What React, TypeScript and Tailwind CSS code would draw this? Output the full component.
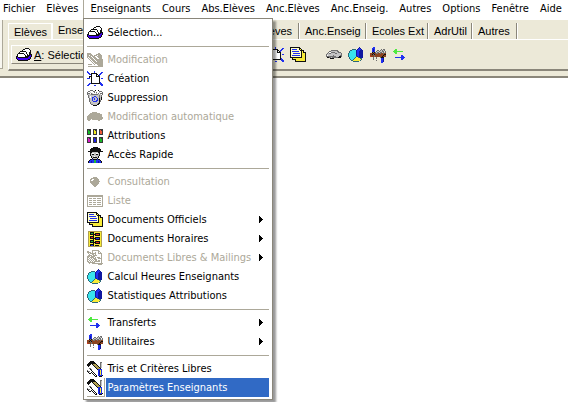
import React from 'react';
import clsx from 'clsx';

const palette: Record<string, string> = {
  k: '#101010',
  w: '#ffffff',
  g: '#aca899',
  s: '#c4c4c4',
  d: '#707070',
  b: '#2030f0',
  n: '#1018a0',
  c: '#38e4ec',
  t: '#2c6878',
  y: '#f8ec38',
  i: '#ffffc8',
  h: '#b0a050',
  r: '#e03020',
  e: '#20b838',
  l: '#50e840',
  p: '#4000f0',
  o: '#8c4420',
};

const Pixels = ({ rows }: { rows: string[] }) => {
  const top = Math.floor((16 - rows.length) / 2);
  return (
    <svg className="h-4 w-4 shrink-0" viewBox="0 0 16 16" shapeRendering="crispEdges" aria-hidden="true">
      {rows.map((row, y) =>
        [...row].map((c, x) =>
          palette[c] ? <rect key={`${x}-${y}`} x={x} y={y + top} width="1" height="1" fill={palette[c]} /> : null,
        ),
      )}
    </svg>
  );
};

const drawer = [
  '.........kkkk...',
  '.......kkwwwwk..',
  '......kwwwwwwwk.',
  '....kkkkkkwwwwk.',
  '...kwwwwwwkwwkk.',
  '..kkkkkkwwkwwkk.',
  '.kwwwwwwkwwkwkkk',
  '.kwwwwwwwkwkkkpk',
  'kkwwwwwwwkkkkppk',
  'kpkkkkkkkkkkppk.',
  'kpppppppppppppk.',
  '.kppppppppppkk..',
  '..kkkkkkkkkk....',
];

const edit = [
  'gggg.......gg...',
  'ggggg....ggggg..',
  'ggwggg.gggwgggg.',
  'ggggwgggwwggggg.',
  'g.gggwgggwwgggg.',
  '.g.gggwgggwwggg.',
  '..g.gggwgggggggg',
  '...g.gggwggggggg',
  '....g.gggwgggggg',
  '.....g.ggggggggg',
  '......g.gggggggg',
  '.gggg..g..gggggg',
  '...........ggggg',
  '.ggggggggggggggg',
];

const create = [
  'b......b........',
  'bb.....b......bb',
  '.bb.kkkkkk...bb.',
  '..bbkwwwwkk.bb..',
  '....kwwwwkwkb...',
  '..kkkwwwwkkkk...',
  '..k.kwwwwwwwk...',
  'bbb.kwwwwwwwk.bb',
  '....kwwwwwwwk...',
  '....kwwwwwwwk...',
  '....kwwwwwwwk...',
  '....kwwwwwwwkb..',
  '..bbkkkkkkkkkbb.',
  '.bb..........bbb',
  'bb.....bb.....bb',
];

const bin = [
  '...ddd..kwwk....',
  '.ddwwwddwwwwddd.',
  'dwwswwwdwdwwswwd',
  'dddwdswwwswdwddd',
  'dsssdddddddssswd',
  '.dssssssssssdsd.',
  '.dswsssbbsssdsd.',
  '.dswsbbssbssdsk.',
  '..dssbsbssbsksk.',
  '..dssbsbssbsksk.',
  '..dssbsssbbskd..',
  '..dsssbbbbsskd..',
  '...dssssssssk...',
  '...dssssssskk...',
  '....ddsssskk....',
  '......kkkk......',
];

const blob = [
  '.....ggggg......',
  '...gggggggggg...',
  '..ggggggggggggg.',
  '.gggggggggggggg.',
  'ggggggggggggggg.',
  'gggggggggggggggg',
  'gggggggggggggggg',
  'gggg.gggggggggg.',
  '.gg........gg...',
];

const person = [
  '......kkkkk.....',
  '....kkkkkkkkk...',
  '...kkkkkkkkkkk..',
  '...kkkkkkkkkkk..',
  '.kkkkkkkkkkkkkkk',
  '...kksssssskk...',
  '...kswwsswwsk...',
  '...kskksskksk...',
  '...kssssssssk...',
  '....ksswsssk....',
  '....kskkkksk....',
  '.....kssssk.....',
  '...kkbkkkkbkk...',
  '..kbbbbeebbbbk..',
  '.kbbnbbeebbnbbk.',
  '.kbbnbbeebbnbbk.',
];

const consult = [
  '......gggg......',
  '....ggggggg.....',
  '...ggwwggggg....',
  '...gwwgggggg....',
  '...gggggggggg...',
  '...ggggggggg....',
  '....gggggggg....',
  '.....gggggg.....',
  '......gggg......',
  '.......gg.......',
];

const list = [
  'gggggggggggggggg',
  'gggggggggggggggg',
  'g..............g',
  'g.ggg.ggg.gggg.g',
  'g..............g',
  'g.ggg.ggg.gggg.g',
  'g..............g',
  'g.ggg.ggg.gggg.g',
  'g..............g',
  'g.ggg.ggg.gggg.g',
  'g..............g',
  'gggggggggggggggg',
];

const docs = [
  'kkkkkkkkkk......',
  'kiiiiiiiikk.....',
  'kibbbbbiikyk....',
  'kiiiiiiiiikkkk..',
  'kibbbbbbbiikyk..',
  'kiiiiiiiiiikykkk',
  'kiibbbbbbbikyyyk',
  'kiiiiiiiiiikyyyk',
  'kibbbbbbbbikyyyk',
  'kiiiiiiiiiikyyyk',
  'kkkkkkkkkkkkyyyk',
  '..kyyyyyyyyyyyyk',
  '..kkkkyyyyyyyyyk',
  '.....kyyyyyyyyyk',
  '.....kkkkkkkkkkk',
];

const schedule = [
  '.hhhhhhhhhhhhhh.',
  '.hykkkkyyyyyyyh.',
  '.hykeekykkkkkyh.',
  '.hykkkkkkrrrkyh.',
  '.hyyyykykkkkkyh.',
  '.hykkkkyyyyyyyh.',
  '.hykrrkykkkkkyh.',
  '.hykkkkkkbbbkyh.',
  '.hyyyykykkkkkyh.',
  '.hykkkkyyyyyyyh.',
  '.hykeekykkkkkyh.',
  '.hykkkkkkrrrkyh.',
  '.hyyyykykkkkkyh.',
  '.hykkkkyyyyyyyh.',
  '.hykbbkykkkkyyh.',
  '.hhhhhhhhhhhhhh.',
];

const mailing = [
  '.....ggggggg....',
  'gg...g.....gg...',
  'gggg.g..g..g.g..',
  '.gwgggggg..gggg.',
  '..gwwgg.g.....g.',
  '.ggggwgggg....g.',
  'gggwgggg......g.',
  'ggwggggwg.ggg.g.',
  'gwgwgwgggwwgggg.',
  'ggwgwgwggg....g.',
  'gwgwgwgwgg.gg.g.',
  'ggwgwgwgggggg.g.',
  '.ggggggg......g.',
  '..g..ggggggggggg',
  '...........gggg.',
];

const chart = [
  '...........n....',
  '..........nbn...',
  '....tttt.nbbbn..',
  '..ttccccnbbbnnn.',
  '.tccccccnbbnnnn.',
  '.tccccccnbbnnnn.',
  'tcccccccnbbnnnn.',
  'tcccccccnbbnnnn.',
  'tcccccccnbbnnnn.',
  'tccccccctnbnnnn.',
  '.tccccctyytnnnn.',
  '.tcccctyyyyytt..',
  '..tcctyyyyyyyt..',
  '...ttyyyyyyyt...',
  '.....tttttt.....',
];

const transfer = [
  '...ll...........',
  '..lll...........',
  '.llllllllll.....',
  '..lll...........',
  '...ll...........',
  '................',
  '.........bb.....',
  '.........bbb....',
  '...bbbbbbbbbb...',
  '.........bbb....',
  '.........bb.....',
];

const bench = [
  '...bb...........',
  '..bbb...........',
  '..bnb......d.dd.',
  '..bnb..dd.dsdsd.',
  '..bnb.dssdssdd.d',
  '..kdkdsddsddsdsd',
  'oookooddoodoodoo',
  'ookdkoooooooookk',
  'oooodooooooookoo',
  'rooodoooooookooo',
  '...d..d...dkkk..',
  '...d..d....bbn..',
  '...d.......bbn..',
  '......d....bbn..',
  '...........bbn..',
  '...........bb...',
];

const tools = [
  '...kkkk.........',
  '..kkkkkk.....dd.',
  '.kkkkkkkk....ds.',
  'kkkk.khhhk...ds.',
  'kkk...khhhk..ds.',
  '.k.....khhhk.ds.',
  '........khhhkds.',
  '..dd.....khhhk..',
  '...kd.....kbbbb.',
  'd..wk......bnyb.',
  'kddwwk.....bnyb.',
  '.kwwkwk....bnyb.',
  '..kk.kwk...bnyb.',
  '......kwk..bnyb.',
  '.......kwk.bbbbk',
  '........kk..kkk.',
];

const car = [
  '.....ddddddd....',
  '...ddssssssdd...',
  '..dwwddddsssddd.',
  '.dsddssssddssssd',
  'dssssssssssssssd',
  'dwsssssdssssssdd',
  'ddddddddddssskkd',
  '.kkddsddddddkkk.',
  '....kkkk........',
];

const folders = [
  { x: 0, y: 1, fill: '#18b828' },
  { x: 6, y: 1, fill: '#f0e820' },
  { x: 12, y: 1, fill: '#f05838' },
  { x: 0, y: 9, fill: '#d818c8' },
  { x: 6, y: 9, fill: '#2020e8' },
  { x: 12, y: 9, fill: '#18b828' },
];

const Folders = () => (
  <svg className="h-4 w-4 shrink-0" viewBox="0 0 16 16" shapeRendering="crispEdges" aria-hidden="true">
    {folders.map((f) => (
      <g key={`${f.x}-${f.y}`}>
        <rect x={f.x} y={f.y} width="4" height="6" fill="#383838" />
        <path d={`M${f.x + 1} ${f.y + 1}h1v1h1v3h-2z`} fill={f.fill} />
      </g>
    ))}
  </svg>
);

const menus = ['Fichier', 'Elèves', 'Enseignants', 'Cours', 'Abs.Elèves', 'Anc.Elèves', 'Anc.Enseig.', 'Autres', 'Options', 'Fenêtre', 'Aide'];

type Entry = {
  label: string;
  icon?: string[];
  disabled?: boolean;
  submenu?: boolean;
  selected?: boolean;
};

const groups: Entry[][] = [
  [{ label: 'Sélection...', icon: drawer }],
  [
    { label: 'Modification', icon: edit, disabled: true },
    { label: 'Création', icon: create },
    { label: 'Suppression', icon: bin },
    { label: 'Modification automatique', icon: blob, disabled: true },
    { label: 'Attributions' },
    { label: 'Accès Rapide', icon: person },
  ],
  [
    { label: 'Consultation', icon: consult, disabled: true },
    { label: 'Liste', icon: list, disabled: true },
    { label: 'Documents Officiels', icon: docs, submenu: true },
    { label: 'Documents Horaires', icon: schedule, submenu: true },
    { label: 'Documents Libres & Mailings', icon: mailing, disabled: true, submenu: true },
    { label: 'Calcul Heures Enseignants', icon: chart },
    { label: 'Statistiques Attributions', icon: chart },
  ],
  [
    { label: 'Transferts', icon: transfer, submenu: true },
    { label: 'Utilitaires', icon: bench, submenu: true },
  ],
  [
    { label: 'Tris et Critères Libres', icon: tools },
    { label: 'Paramètres Enseignants', icon: tools, selected: true },
  ],
];

const MenuRow = ({ label, icon, disabled, submenu, selected }: Entry) => (
  <button
    type="button"
    role="menuitem"
    disabled={disabled}
    className={clsx('flex h-[19px] w-full items-center gap-px text-left', disabled && 'text-[#aca899]')}
  >
    <span className={clsx('flex h-[19px] w-[18px] shrink-0 items-center', selected && 'border-r border-b border-[#aca899]')}>
      {icon ? <Pixels rows={icon} /> : <Folders />}
    </span>
    <span className={clsx('flex h-[19px] flex-1 items-center justify-between pr-1.5 pl-px', selected && 'bg-[#316ac5] text-white')}>
      {label}
      {submenu && (
        <svg className="h-[7px] w-1" viewBox="0 0 4 7" fill="#000" shapeRendering="crispEdges" aria-hidden="true">
          <path d="M0 0h1v1h1v1h1v1h1v1h-1v1h-1v1h-1v1h-1z" />
        </svg>
      )}
    </span>
  </button>
);

const DropMenu = () => (
  <div
    role="menu"
    className="absolute top-full -left-px z-10 w-[190px] border border-[#8a867a] bg-white px-[3px] pt-1 pb-0.5 shadow-[3px_3px_2px_rgba(0,0,0,0.4)]"
  >
    {groups.map((group, i) => (
      <React.Fragment key={i}>
        {i > 0 && (
          <div role="separator" className="flex h-2 items-center">
            <div className="h-px w-full bg-[#aca899]" />
          </div>
        )}
        {group.map((entry) => (
          <MenuRow key={entry.label} {...entry} />
        ))}
      </React.Fragment>
    ))}
  </div>
);

const Tab = ({ label, className }: { label: string; className?: string }) => (
  <button
    type="button"
    role="tab"
    className={clsx('h-4 shrink-0 border-r border-[#8a867a] text-left shadow-[1px_0_0_#fff]', className)}
  >
    {label}
  </button>
);

const App = () => (
  <div className="min-h-screen overflow-hidden bg-white font-['DejaVu_Sans_Condensed','DejaVu_Sans',sans-serif] text-[11px] leading-4 whitespace-nowrap text-black">
    <nav role="menubar" className="flex h-5">
      {menus.map((label) => (
        <div key={label} className={clsx('relative h-[18px]', label === 'Enseignants' && 'border-l border-[#aca899]')}>
          <button type="button" role="menuitem" className={clsx('h-[18px] pr-[5px]', label === 'Fichier' ? 'pl-[3px]' : 'pl-1.5')}>
            {label}
          </button>
          {label === 'Enseignants' && <DropMenu />}
        </div>
      ))}
    </nav>

    <div className="flex h-[58px] border-b-2 border-[#8a867a] bg-[#ece9d8] font-['Liberation_Sans',sans-serif]">
      <div className="mr-[5px] h-[49px] w-[3px] border-r border-b border-[#aca899] bg-[#f8f7f0]" />
      <div className="flex-1">
        <div role="tablist" className="flex h-[19px] items-end">
          <Tab label="Elèves" className="w-11 border-t border-l border-t-white border-r-white border-l-white pl-[5px]" />
          <Tab label="Enseignants" className="w-[72px] self-start pt-0.5 pl-1.5" />
          <Tab label="Cours" className="w-14 pl-1.5" />
          <Tab label="Abs.Elèves" className="w-[119px] pr-1.5 text-right" />
          <Tab label="Anc.Enseig" className="w-[67px] pl-1.5" />
          <Tab label="Ecoles Ext" className="w-[62px] pl-1.5" />
          <Tab label="AdrUtil" className="w-11 pl-1.5" />
          <Tab label="Autres" className="w-[45px] pl-1.5" />
        </div>
        <div className="flex h-8 items-center border-t border-b-2 border-l border-t-white border-b-[#8a867a] border-l-white pl-0.5">
          <button
            type="button"
            className="flex h-[19px] w-[220px] items-center gap-0.5 border border-white border-r-[#8a867a] border-b-[#8a867a] pl-1"
          >
            <Pixels rows={drawer} />
            <span>
              <span className="underline">A</span>: Sélection
            </span>
          </button>
          <div className="ml-[37px] flex items-center gap-1.5">
            <button type="button" aria-label="Création"><Pixels rows={create} /></button>
            <button type="button" aria-label="Documents"><Pixels rows={docs} /></button>
            <button type="button" aria-label="Modification automatique" className="ml-3.5"><Pixels rows={car} /></button>
            <button type="button" aria-label="Statistiques"><Pixels rows={chart} /></button>
            <button type="button" aria-label="Utilitaires"><Pixels rows={bench} /></button>
            <button type="button" aria-label="Transferts"><Pixels rows={transfer} /></button>
          </div>
        </div>
      </div>
    </div>
  </div>
);

export default App;
